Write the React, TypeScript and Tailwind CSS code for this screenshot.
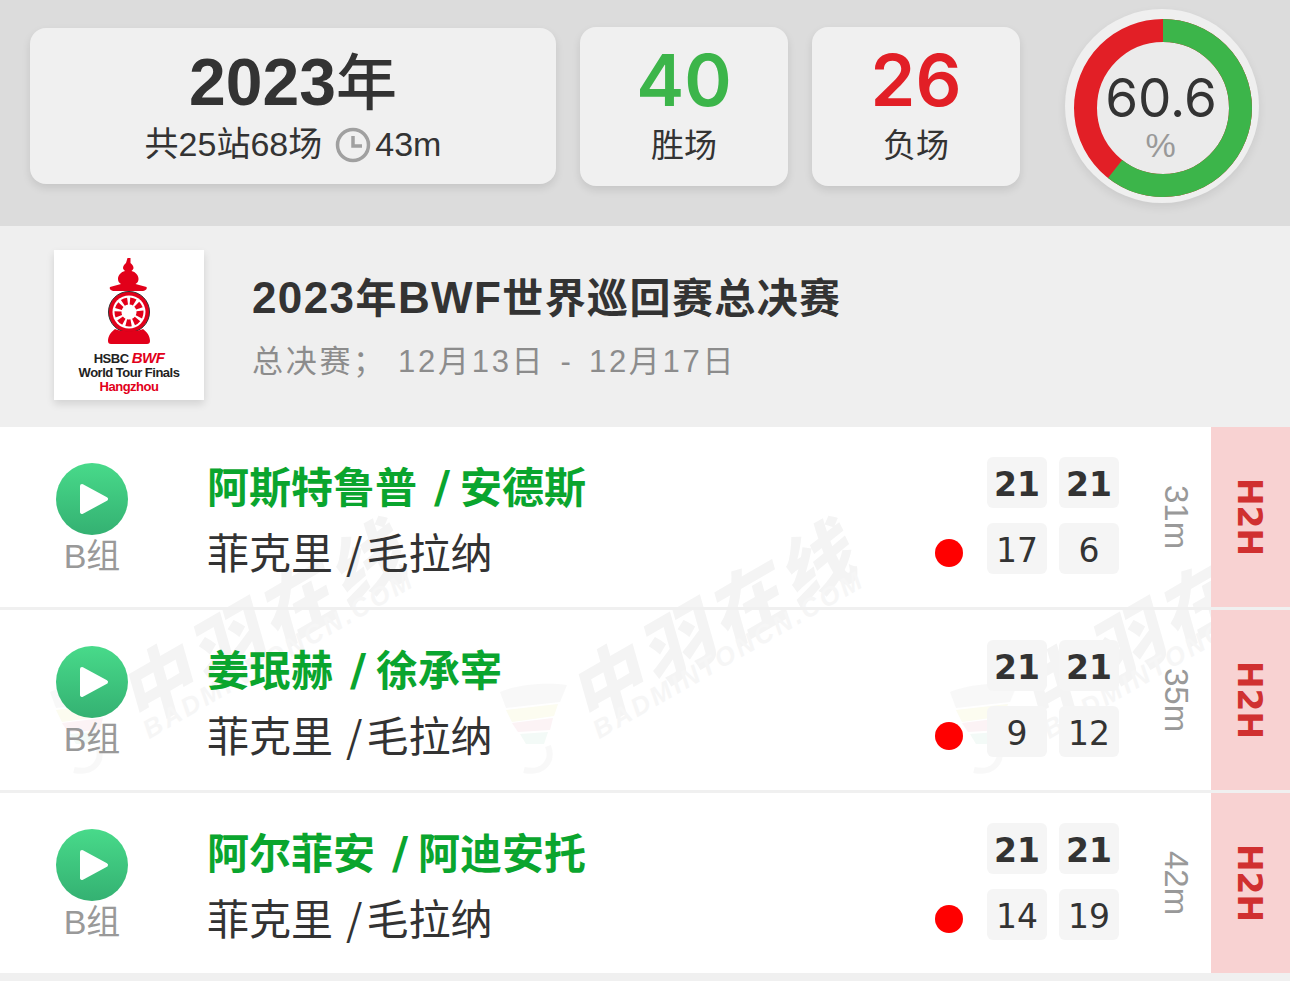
import React from "react";

const sans = "font-['Liberation_Sans','Noto_Sans_CJK_SC',sans-serif]";
const noto = "font-['Noto_Sans_CJK_SC',sans-serif]";

const matches = [
  { winner: ["阿斯特鲁普", "安德斯"], scores: [17, 6], time: "31m" },
  { winner: ["姜珉赫", "徐承宰"], scores: [9, 12], time: "35m" },
  { winner: ["阿尔菲安", "阿迪安托"], scores: [14, 19], time: "42m" },
];

const Watermark = ({ className }: { className: string }) => (
  <div className={"absolute " + className}>
    <svg width="70" height="96" viewBox="0 0 70 96" className="absolute left-[-80px] top-[13px] opacity-70">
      <path d="M2 12 C20 4 50 2 69 5 L62 22 L8 28 Z" fill="#f6f6f6" />
      <path d="M8 30 L60 24 L56 36 L14 42 Z" fill="#fbfbea" />
      <path d="M14 43 L55 38 L52 50 L20 52 Z" fill="#fbeef2" />
      <path d="M22 54 L50 52 L46 64 L28 64 Z" fill="#eff9f4" />
      <path d="M50 66 C56 82 44 94 26 90" fill="none" stroke="#f6f6f6" strokeWidth="6" />
    </svg>
    <div className="origin-left -rotate-[30deg] whitespace-nowrap">
      <div className={noto + " text-[74px] leading-[61px] font-black tracking-[6px] italic text-[#f4f4f4]"}>中羽在线</div>
      <div className="-translate-y-[4px] pl-[4px] font-['Liberation_Sans',sans-serif] text-[26px] leading-[26px] font-bold italic tracking-[3px] text-[#f6f6f6]">BADMINTONCN.COM</div>
    </div>
  </div>
);

const Logo = () => (
  <div className="flex h-[150px] w-[150px] flex-col items-center bg-white pt-[8px] shadow-[0_4px_8px_rgba(0,0,0,0.12)]">
    <svg width="44" height="86" viewBox="0 0 44 86">
      <path d="M20.5 0h3v5c2 2 3 3 3 5 0 1-1 2-2 3 4 1 7 4 7 8 0 2-1 4-3 5l11 3c1 2-1 4-5 4H8c-4 0-6-2-5-4l11-3c-2-1-3-3-3-5 0-4 3-7 7-8-1-1-2-2-2-3 0-2 1-3 3-5z" fill="#e2001a" />
      <circle cx="22" cy="54" r="20.5" fill="#e2001a" stroke="#333" strokeWidth="1" />
      <circle cx="22" cy="54" r="16.5" fill="#fff" />
      <circle cx="22" cy="54" r="11" fill="none" stroke="#e2001a" strokeWidth="7" strokeDasharray="5 2.5" />
      <circle cx="22" cy="54" r="6" fill="#fff" />
      <path d="M8 71c5 3 23 3 28 0 4 3 7 7 7 12 0 2-1 3-3 3H4c-2 0-3-1-3-3 0-5 3-9 7-12z" fill="#e2001a" />
    </svg>
    <div className="mt-[7px] flex flex-col items-center font-['Liberation_Sans',sans-serif] text-[13px] leading-[14px] font-bold tracking-[-0.5px] text-[#222]">
      <span>
        HSBC <span className="text-[15px] leading-[14px] italic text-[#e2001a]">BWF</span>
      </span>
      <span>World Tour Finals</span>
      <span className="text-[#e2001a]">Hangzhou</span>
    </div>
  </div>
);

const Row = ({ winner, scores, time }: { winner: string[]; scores: number[]; time: string }) => (
  <div className="relative flex h-[183px] border-b-[3px] border-[#f0f0f0]">
    <div className="flex w-[184px] flex-col items-center pt-[36px]">
      <div className="flex h-[72px] w-[72px] items-center justify-center rounded-full bg-gradient-to-b from-[#48da8a] to-[#34b172]">
        <svg width="30" height="32" viewBox="0 0 30 32" className="ml-[4px]">
          <path d="M3 3 L27 16 L3 29 Z" fill="#fff" stroke="#fff" strokeWidth="4" strokeLinejoin="round" />
        </svg>
      </div>
      <div className={sans + " text-[34px] leading-[42px] text-[#999]"}>B组</div>
    </div>
    <div className={noto + " ml-[23px] flex-1 pt-[25px] text-[42px] leading-[66px]"}>
      <div className="font-bold text-[#0aa52e]">
        {winner[0]}
        <span className="ml-[17px] mr-[10px] font-['DejaVu_Sans',sans-serif] text-[44px] leading-[44px]">/</span>
        {winner[1]}
      </div>
      <div className="text-[#333]">
        菲克里<span className="ml-[13px] mr-[4px]">/</span>毛拉纳
      </div>
    </div>
    <div className="mr-[24px] flex items-end pb-[40px]">
      <div className="h-[28px] w-[28px] rounded-full bg-[#ff0000]" />
    </div>
    <div className="grid grid-cols-[60px_60px] grid-rows-[51px_51px] gap-x-[12px] gap-y-[15px] pt-[30px] font-['DejaVu_Sans',sans-serif] text-[33px] leading-[33px] text-[#333]">
      <div className="flex items-center justify-center rounded-[6px] bg-[#f5f5f5] pt-[4px] font-bold">21</div>
      <div className="flex items-center justify-center rounded-[6px] bg-[#f5f5f5] pt-[4px] font-bold">21</div>
      <div className="flex items-center justify-center rounded-[6px] bg-[#f5f5f5] pt-[4px]">{scores[0]}</div>
      <div className="flex items-center justify-center rounded-[6px] bg-[#f5f5f5] pt-[4px]">{scores[1]}</div>
    </div>
    <div className="flex w-[92px] items-center justify-end pr-[18px]">
      <span className="font-['Liberation_Sans',sans-serif] text-[33px] leading-[33px] text-[#999] [writing-mode:vertical-rl]">{time}</span>
    </div>
    <div className="relative z-10 flex w-[79px] items-center justify-center bg-[#f8d2d2]">
      <span className="pr-[3px] font-['DejaVu_Sans',sans-serif] text-[33px] leading-[33px] font-bold text-[#d03030] [writing-mode:vertical-rl]">H2H</span>
    </div>
  </div>
);

const Stat = ({ value, label, color }: { value: number; label: string; color: string }) => (
  <div className="mt-[27px] flex h-[159px] w-[208px] flex-col items-center rounded-[16px] bg-[#f0f0f0] pt-[16px] shadow-[0_4px_8px_rgba(0,0,0,0.1)]">
    <div className={"font-['Inter',sans-serif] text-[72px] leading-[74px] font-semibold " + color}>{value}</div>
    <div className={noto + " mt-[5px] text-[33px] leading-[42px] text-[#333]"}>{label}</div>
  </div>
);

const App = () => (
  <div className={sans + " h-[981px] w-[1290px] overflow-hidden bg-[#f0f0f0]"}>
    <div className="flex h-[226px] items-start gap-[24px] bg-[#dcdcdc] pl-[30px]">
      <div className="mt-[28px] flex h-[156px] w-[526px] flex-col items-center rounded-[16px] bg-[#f0f0f0] pt-[18px] shadow-[0_4px_8px_rgba(0,0,0,0.1)]">
        <div className="text-[66px] leading-[72px] font-bold text-[#333]">
          2023<span className="text-[61px] font-medium">年</span>
        </div>
        <div className="mt-[3px] flex items-center text-[34px] leading-[40px] text-[#333]">
          共25站68场
          <svg width="38" height="38" viewBox="0 0 38 38" className="ml-[13px] mr-[2px] mt-[4px]">
            <circle cx="18" cy="18" r="15.5" fill="none" stroke="#a0a0a0" strokeWidth="3.5" />
            <path d="M18 9v10h9" fill="none" stroke="#a0a0a0" strokeWidth="3.5" />
          </svg>
          43m
        </div>
      </div>
      <Stat value={40} label="胜场" color="text-[#3cb54a]" />
      <Stat value={26} label="负场" color="text-[#e21f26]" />
      <div className="relative ml-[21px] mt-[9px] flex h-[194px] w-[194px] flex-col items-center rounded-full bg-[#efefef] pt-[59px] shadow-[0_4px_10px_rgba(0,0,0,0.08)]">
        <svg width="178" height="178" viewBox="0 0 178 178" className="absolute left-[9px] top-[10px] -rotate-90">
          <circle cx="89" cy="89" r="77.5" fill="#ebebeb" stroke="#e21f26" strokeWidth="23" />
          <circle cx="89" cy="89" r="77.5" fill="none" stroke="#3cb54a" strokeWidth="23" pathLength="100" strokeDasharray="60.6 39.4" />
        </svg>
        <div className="relative -ml-[2px] font-['Inter',sans-serif] text-[53px] leading-[60px] text-[#333]">60.6</div>
        <div className="relative -ml-[3px] mt-[2px] text-[34px] leading-[30px] text-[#999]">%</div>
      </div>
    </div>
    <div className="flex h-[201px] items-start bg-[#efefef] pl-[54px] pt-[24px]">
      <Logo />
      <div className="ml-[48px] pt-[17px]">
        <div className="text-[44px] leading-[62px] font-bold tracking-[1.4px] text-[#333]">
          2023<span className="text-[41px]">年</span>BWF<span className="text-[41px]">世界巡回赛总决赛</span>
        </div>
        <div className="text-[31px] leading-[64px] tracking-[2.7px] whitespace-pre text-[#8c8c8c]">
          总决赛； 12月13日 <span className="px-[4px]">-</span> 12月17日
        </div>
      </div>
    </div>
    <div className="relative overflow-hidden bg-white">
      <Watermark className="left-[128px] top-[240px]" />
      <Watermark className="left-[578px] top-[240px]" />
      <Watermark className="left-[1028px] top-[240px]" />
      {matches.map((m) => (
        <Row key={m.time} winner={m.winner} scores={m.scores} time={m.time} />
      ))}
    </div>
  </div>
);

export default App;
